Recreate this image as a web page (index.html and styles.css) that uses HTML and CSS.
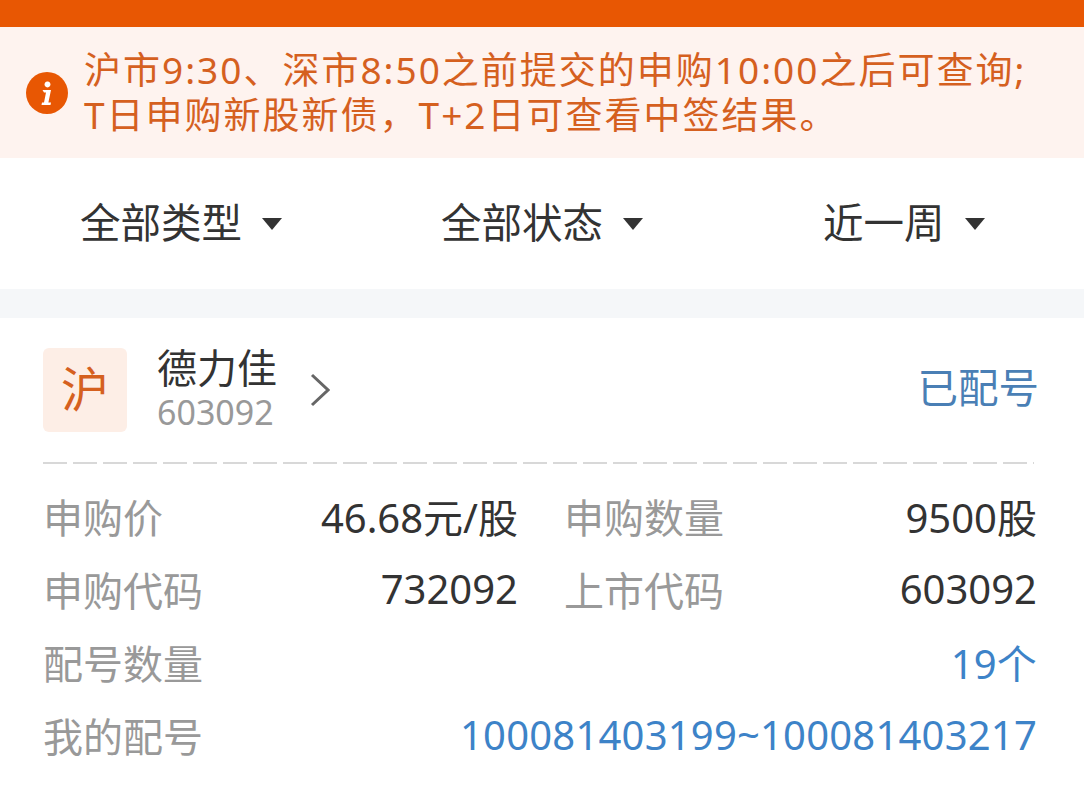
FILE: index.html
```html
<!DOCTYPE html>
<html lang="zh-CN">
<head>
<meta charset="UTF-8">
<meta name="viewport" content="width=device-width, initial-scale=1.0">
<title>新股申购记录</title>
<link rel="stylesheet" href="styles.css">
</head>
<body>

<div class="topbar"></div>

<div class="notice">
  <svg class="notice-icon" width="42" height="42" viewBox="0 0 42 42">
    <circle cx="21" cy="21" r="21" fill="#e85703"/>
    <path d="M22 9.5a3 3 0 1 1 -1 0z M16.5 18h8.5l-2.6 12.5h2.6l-.5 2.5h-9l.5-2.5h2l2-10h-2z" fill="#fff"/>
  </svg>
  <div class="notice-text">
    <div>沪市9:30、深市8:50之前提交的申购10:00之后可查询;</div>
    <div>T日申购新股新债，T+2日可查看中签结果。</div>
  </div>
</div>

<div class="filters">
  <div class="filter filter-type"><span class="filter-label">全部类型</span><span class="caret"></span></div>
  <div class="filter filter-status"><span class="filter-label">全部状态</span><span class="caret"></span></div>
  <div class="filter filter-date"><span class="filter-label">近一周</span><span class="caret"></span></div>
</div>

<div class="gap"></div>

<div class="card">
  <div class="card-head">
    <div class="market"><span class="market-text">沪</span></div>
    <div class="stock">
      <div class="stock-name">德力佳</div>
      <div class="stock-code">603092</div>
    </div>
    <svg class="chevron" width="20" height="34" viewBox="0 0 20 34">
      <path d="M2 2l16 15L2 32" fill="none" stroke="#666" stroke-width="3"/>
    </svg>
    <div class="status">已配号</div>
  </div>

  <div class="divider"></div>

  <div class="details">
    <div class="pair">
      <div class="row"><span class="label">申购价</span><span class="value">46.68元/股</span></div>
      <div class="row"><span class="label">申购数量</span><span class="value">9500股</span></div>
    </div>
    <div class="pair">
      <div class="row"><span class="label">申购代码</span><span class="value">732092</span></div>
      <div class="row"><span class="label">上市代码</span><span class="value">603092</span></div>
    </div>
    <div class="row"><span class="label">配号数量</span><span class="value link">19个</span></div>
    <div class="row"><span class="label">我的配号</span><span class="value link">100081403199~100081403217</span></div>
  </div>
</div>

</body>
</html>
```

FILE: styles.css
```css
* {
  box-sizing: border-box;
}

html,
body {
  height: 100%;
}

body {
  margin: 0;
  overflow: hidden;
  background-color: #fff;
  color: #333;
  font-family: "Noto Sans", "Noto Sans CJK SC", sans-serif;
}

.topbar {
  height: 27px;
  background-color: #e85703;
}

.notice {
  display: flex;
  align-items: center;
  height: 131px;
  padding-left: 26px;
  background-color: #fef3ef;
  color: #d5601f;
  font-size: 37px;
  line-height: 45px;
  letter-spacing: 2px;
}

.notice-icon {
  flex: none;
  margin-right: 16px;
}

.notice-text {
  margin-bottom: 2px;
  white-space: nowrap;
}

.filters {
  display: flex;
  align-items: center;
  height: 131px;
  font-size: 40.5px;
}

.filter {
  display: flex;
  align-items: center;
  white-space: nowrap;
}

.filter-label {
  margin-bottom: 7px;
}

.filter-type {
  margin-left: 80px;
}

.filter-status {
  margin-left: 159px;
}

.filter-date {
  margin-left: 180px;
}

.caret {
  width: 0;
  height: 0;
  margin-left: 20px;
  border-top: 12px solid #333;
  border-left: 10px solid transparent;
  border-right: 10px solid transparent;
}

.gap {
  height: 29px;
  background-color: #f5f7f9;
}

.card {
  padding: 29px 47px 0 43px;
}

.card-head {
  display: flex;
  align-items: center;
  height: 85px;
}

.market {
  display: flex;
  align-items: center;
  justify-content: center;
  width: 84px;
  height: 84px;
  border-radius: 6px;
  background-color: #fdeee6;
  color: #d5601f;
  font-size: 48px;
}

.market-text {
  margin-bottom: 8px;
}

.stock {
  margin-left: 30px;
  margin-bottom: 1px;
}

.stock-name {
  font-size: 40px;
  line-height: 44px;
}

.stock-code {
  margin-top: 2px;
  color: #999;
  font-size: 34px;
  line-height: 41px;
}

.chevron {
  margin-left: 33px;
}

.status {
  margin-left: auto;
  margin-right: -2px;
  margin-bottom: 8px;
  color: #4a7fb5;
  font-size: 40.5px;
}

.divider {
  height: 2px;
  margin: 30px 3px 0 0;
  background: repeating-linear-gradient(to right, #d8d8d8 0, #d8d8d8 24px, transparent 24px, transparent 30px);
}

.details {
  padding-top: 15px;
}

.pair {
  display: grid;
  grid-template-columns: 475px 1fr;
  column-gap: 46px;
}

.row {
  display: flex;
  justify-content: space-between;
  height: 73px;
  align-items: center;
  font-size: 40px;
  white-space: nowrap;
}

.label {
  color: #999;
}

.link {
  color: #3d83c8;
  letter-spacing: 0.2px;
}
```
